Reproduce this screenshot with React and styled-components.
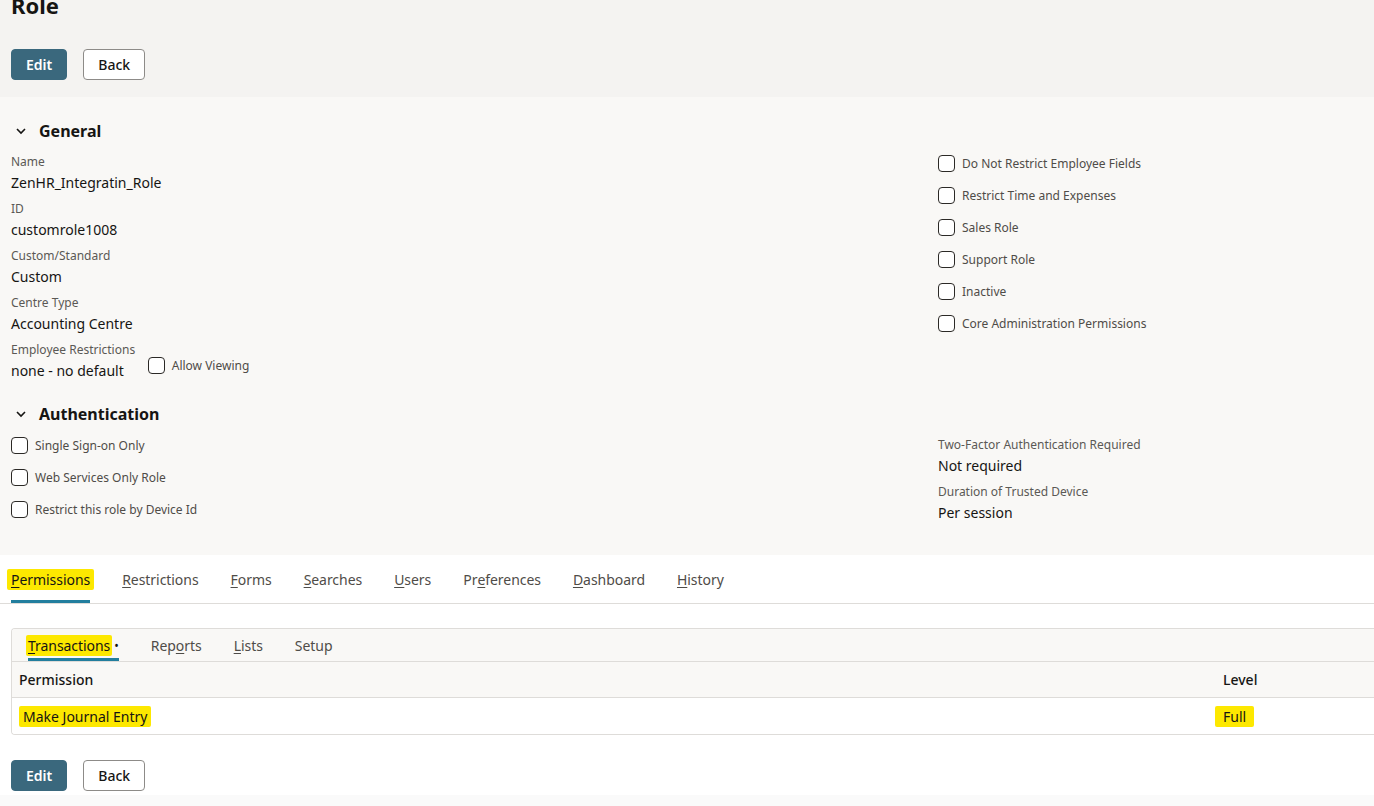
import React from "react";
import styled, { createGlobalStyle } from "styled-components";

const Global = createGlobalStyle`
  html, body { margin: 0; padding: 0; background: #fff; }
  body { font-family: "Noto Sans", "Open Sans", sans-serif; color: #161513; }
  * { box-sizing: border-box; }
`;

const Page = styled.div`
  width: 1374px;
  height: 806px;
  overflow: hidden;
  display: flex;
  flex-direction: column;
`;

const Header = styled.div`
  background: #f4f3f1;
  height: 97px;
  padding: 0 11px;
  display: flex;
  flex-direction: column;
`;

const Title = styled.h1`
  margin: -10px 0 0 0;
  font-size: 22px;
  line-height: 30px;
  font-weight: 700;
`;

const ButtonRow = styled.div`
  display: flex;
  gap: 16px;
  margin-top: ${(p) => p.$top || 0}px;
`;

const Button = styled.button`
  height: 31px;
  padding: 0 14px;
  min-width: ${(p) => (p.$primary ? 56 : 61)}px;
  border-radius: 4px;
  font-family: inherit;
  font-size: 14px;
  font-weight: ${(p) => (p.$primary ? 600 : 500)};
  color: ${(p) => (p.$primary ? "#fff" : "#161513")};
  background: ${(p) => (p.$primary ? "#3a687d" : "#fff")};
  border: 1px solid ${(p) => (p.$primary ? "#3a687d" : "#8d8b88")};
`;

const Main = styled.div`
  background: #f9f8f6;
  height: 458px;
  padding: 22px 11px 0 11px;
`;

const SectionHead = styled.div`
  display: flex;
  align-items: center;
  gap: 12px;
  height: 24px;
  padding-left: 4px;
  font-size: 16px;
  font-weight: 700;
  svg { flex: none; }
`;

const Cols = styled.div`
  display: grid;
  grid-template-columns: 927px 1fr;
  margin-top: ${(p) => p.$top || 0}px;
`;

const Col = styled.div`
  display: flex;
  flex-direction: column;
  padding-top: ${(p) => p.$pt || 0}px;
`;

const Field = styled.div`
  display: flex;
  flex-direction: column;
  height: 47px;
`;

const Label = styled.div`
  font-size: 12px;
  line-height: 16px;
  color: #5b5955;
  margin-top: 7px;
`;

const Value = styled.div`
  font-size: 14px;
  line-height: 20px;
  margin-top: 3px;
  color: #161513;
  display: flex;
  align-items: center;
`;

const CheckRow = styled.label`
  display: flex;
  align-items: center;
  gap: 7px;
  height: 32px;
  font-size: 12px;
  color: #4f4c48;
`;

const Box = styled.span`
  width: 17px;
  height: 17px;
  border: 1.5px solid #2b2926;
  border-radius: 4px;
  background: #fff;
  flex: none;
`;

const Inline = styled.span`
  display: inline-flex;
  align-items: center;
  gap: 7px;
  margin-left: 24px;
  margin-top: -11px;
  font-size: 12px;
  color: #4f4c48;
`;

const Tabs = styled.div`
  display: flex;
  gap: 32px;
  height: 49px;
  padding: 0 11px;
  border-bottom: 1px solid #dedcd9;
`;

const Tab = styled.div`
  position: relative;
  display: flex;
  align-items: center;
  font-size: 14px;
  letter-spacing: -0.05px;
  color: #4f4c48;
  ${(p) =>
    p.$active &&
    `color:#161513; &::after{content:"";position:absolute;left:0;right:0;bottom:0;height:3px;background:#227e9e;}`}
`;

const U = styled.span`
  text-decoration: underline;
  text-underline-offset: 2px;
`;

const Hl = styled.span`
  background: #fde800;
  padding: 1px ${(p) => p.$pad ?? 4}px;
  margin: 0 -${(p) => p.$pad ?? 4}px;
  border-radius: 2px;
`;

const Card = styled.div`
  margin: 24px 0 0 11px;
  border: 1px solid #dedcd9;
  border-right: none;
  border-radius: 4px 0 0 4px;
  overflow: hidden;
`;

const SubTabs = styled.div`
  display: flex;
  gap: 32px;
  height: 33px;
  padding: 0 16px;
  background: #f9f8f6;
  border-bottom: 1px solid #dedcd9;
`;

const Dot = styled.span`
  margin-left: 4px;
  font-size: 12px;
`;

const Row = styled.div`
  display: grid;
  grid-template-columns: ${(p) => 1211 - (p.$pl || 7)}px 1fr;
  align-items: center;
  height: ${(p) => p.$h}px;
  padding-left: ${(p) => p.$pl || 7}px;
  background: ${(p) => (p.$head ? "#f9f8f6" : "#fff")};
  border-bottom: ${(p) => (p.$head ? "1px solid #dedcd9" : "none")};
  font-size: 14px;
  font-weight: ${(p) => (p.$head ? 500 : 400)};
`;

const Footer = styled.div`
  flex: 1;
  display: flex;
  flex-direction: column;
  padding-left: 11px;
`;

const Strip = styled.div`
  margin: 4px 0 0 -11px;
  background: #fafafa;
  flex: 1;
`;

const Spacer = styled.div`
  height: ${(p) => p.$h}px;
`;

const Chevron = () => (
  <svg width="12" height="12" viewBox="0 0 12 12">
    <path d="M2 4l4 4 4-4" fill="none" stroke="#161513" strokeWidth="1.6" />
  </svg>
);

const Check = ({ children }) => (
  <CheckRow>
    <Box />
    {children}
  </CheckRow>
);

export default function App() {
  return (
    <Page>
      <Global />
      <Header>
        <Title>Role</Title>
        <ButtonRow $top={29}>
          <Button $primary>Edit</Button>
          <Button>Back</Button>
        </ButtonRow>
      </Header>
      <Main>
        <SectionHead>
          <Chevron />
          General
        </SectionHead>
        <Cols $top={4}>
          <Col>
            <Field>
              <Label>Name</Label>
              <Value>ZenHR_Integratin_Role</Value>
            </Field>
            <Field>
              <Label>ID</Label>
              <Value>customrole1008</Value>
            </Field>
            <Field>
              <Label>Custom/Standard</Label>
              <Value>Custom</Value>
            </Field>
            <Field>
              <Label>Centre Type</Label>
              <Value>Accounting Centre</Value>
            </Field>
            <Field>
              <Label>Employee Restrictions</Label>
              <Value>
                none - no default
                <Inline>
                  <Box />
                  Allow Viewing
                </Inline>
              </Value>
            </Field>
          </Col>
          <Col>
            <Check>Do Not Restrict Employee Fields</Check>
            <Check>Restrict Time and Expenses</Check>
            <Check>Sales Role</Check>
            <Check>Support Role</Check>
            <Check>Inactive</Check>
            <Check>Core Administration Permissions</Check>
          </Col>
        </Cols>
        <Spacer $h={20} />
        <SectionHead>
          <Chevron />
          Authentication
        </SectionHead>
        <Cols $top={3}>
          <Col>
            <Check>Single Sign-on Only</Check>
            <Check>Web Services Only Role</Check>
            <Check>Restrict this role by Device Id</Check>
          </Col>
          <Col $pt={1}>
            <Field>
              <Label>Two-Factor Authentication Required</Label>
              <Value>Not required</Value>
            </Field>
            <Field>
              <Label>Duration of Trusted Device</Label>
              <Value>Per session</Value>
            </Field>
          </Col>
        </Cols>
      </Main>
      <Tabs>
        <Tab $active>
          <Hl>
            <U>P</U>ermissions
          </Hl>
        </Tab>
        <Tab>
          <U>R</U>estrictions
        </Tab>
        <Tab>
          <U>F</U>orms
        </Tab>
        <Tab>
          <U>S</U>earches
        </Tab>
        <Tab>
          <U>U</U>sers
        </Tab>
        <Tab>
          Pr<U>e</U>ferences
        </Tab>
        <Tab>
          <U>D</U>ashboard
        </Tab>
        <Tab>
          <U>H</U>istory
        </Tab>
      </Tabs>
      <Card>
        <SubTabs>
          <Tab $active>
            <Hl $pad={2}>
              <U>T</U>ransactions
            </Hl>
            <Dot>•</Dot>
          </Tab>
          <Tab>
            Rep<U>o</U>rts
          </Tab>
          <Tab>
            <U>L</U>ists
          </Tab>
          <Tab>Setup</Tab>
        </SubTabs>
        <Row $head $h={36}>
          <span>Permission</span>
          <span>Level</span>
        </Row>
        <Row $h={36} $pl={11}>
          <span>
            <Hl>Make Journal Entry</Hl>
          </span>
          <span>
            <Hl $pad={8}>Full</Hl>
          </span>
        </Row>
      </Card>
      <Footer>
        <ButtonRow $top={25}>
          <Button $primary>Edit</Button>
          <Button>Back</Button>
        </ButtonRow>
        <Strip />
      </Footer>
    </Page>
  );
}
